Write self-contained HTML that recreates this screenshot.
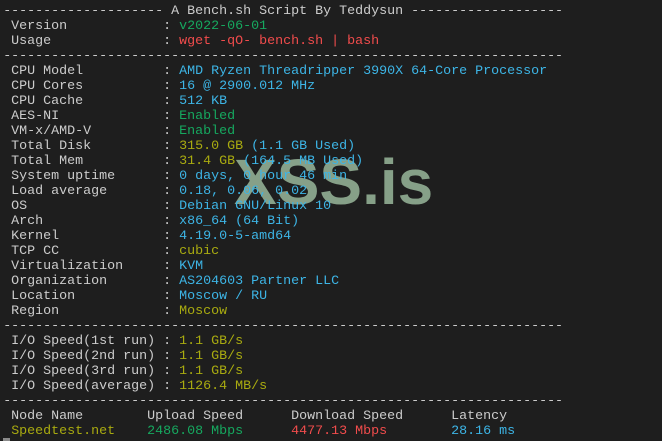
<!DOCTYPE html>
<html>
<head>
<meta charset="utf-8">
<style>
html,body{margin:0;padding:0;width:662px;height:441px;overflow:hidden;background:#1e1e1e}
#t{position:absolute;left:3.2px;top:4px;margin:0;font:13.33px/15px "Liberation Mono",monospace;color:#cccccc;white-space:pre;z-index:2}
#w{position:absolute;left:234px;top:146px;font:bold 64px/72px "Liberation Sans",sans-serif;color:#86a088;white-space:pre;z-index:1}
#c{position:absolute;left:3px;top:438px;width:7px;height:3px;background:#8a8a8a}
.g{color:#16a85f}.r{color:#f14c4c}.b{color:#3db5e6}.y{color:#a9ab10}
</style>
</head>
<body>
<div id="w">XSS.is</div>
<pre id="t">-------------------- A Bench.sh Script By Teddysun -------------------
 Version            : <span class="g">v2022-06-01</span>
 Usage              : <span class="r">wget -qO- bench.sh | bash</span>
----------------------------------------------------------------------
 CPU Model          : <span class="b">AMD Ryzen Threadripper 3990X 64-Core Processor</span>
 CPU Cores          : <span class="b">16 @ 2900.012 MHz</span>
 CPU Cache          : <span class="b">512 KB</span>
 AES-NI             : <span class="g">Enabled</span>
 VM-x/AMD-V         : <span class="g">Enabled</span>
 Total Disk         : <span class="y">315.0 GB</span> <span class="b">(1.1 GB Used)</span>
 Total Mem          : <span class="y">31.4 GB</span> <span class="b">(164.5 MB Used)</span>
 System uptime      : <span class="b">0 days, 0 hour 46 min</span>
 Load average       : <span class="b">0.18, 0.06, 0.02</span>
 OS                 : <span class="b">Debian GNU/Linux 10</span>
 Arch               : <span class="b">x86_64 (64 Bit)</span>
 Kernel             : <span class="b">4.19.0-5-amd64</span>
 TCP CC             : <span class="y">cubic</span>
 Virtualization     : <span class="b">KVM</span>
 Organization       : <span class="b">AS204603 Partner LLC</span>
 Location           : <span class="b">Moscow / RU</span>
 Region             : <span class="y">Moscow</span>
----------------------------------------------------------------------
 I/O Speed(1st run) : <span class="y">1.1 GB/s</span>
 I/O Speed(2nd run) : <span class="y">1.1 GB/s</span>
 I/O Speed(3rd run) : <span class="y">1.1 GB/s</span>
 I/O Speed(average) : <span class="y">1126.4 MB/s</span>
----------------------------------------------------------------------
 Node Name        Upload Speed      Download Speed      Latency
 <span class="y">Speedtest.net</span>    <span class="g">2486.08 Mbps</span>      <span class="r">4477.13 Mbps</span>        <span class="b">28.16 ms</span></pre>
<div id="c"></div>
</body>
</html>
